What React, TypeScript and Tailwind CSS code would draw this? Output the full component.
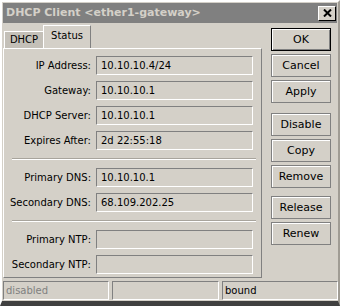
const font = { fontFamily: '"DejaVu Sans", "Liberation Sans", sans-serif' };

type Row = { label: string; value: string };

const groups: Row[][] = [
  [
    { label: "IP Address:", value: "10.10.10.4/24" },
    { label: "Gateway:", value: "10.10.10.1" },
    { label: "DHCP Server:", value: "10.10.10.1" },
    { label: "Expires After:", value: "2d 22:55:18" },
  ],
  [
    { label: "Primary DNS:", value: "10.10.10.1" },
    { label: "Secondary DNS:", value: "68.109.202.25" },
  ],
  [
    { label: "Primary NTP:", value: "" },
    { label: "Secondary NTP:", value: "" },
  ],
];

const buttonGroups = [
  ["OK", "Cancel", "Apply"],
  ["Disable", "Copy", "Remove"],
  ["Release", "Renew"],
];

function Field({ label, value }: Row) {
  return (
    <div className="flex items-center h-[19px]">
      <div className="w-[87px] text-right text-[10px] text-black leading-none">
        {label}
      </div>
      <div className="ml-[5px] w-[157px] h-[19px] border-t border-l border-[#808080] border-b-white border-r-white border-b border-r flex items-center pl-[4px] text-[10px] text-black leading-none">
        {value}
      </div>
    </div>
  );
}

function Button({ label, primary }: { label: string; primary?: boolean }) {
  return (
    <div
      className={
        "w-[60px] h-[23px] flex items-center justify-center text-[11px] text-black leading-none " +
        (primary
          ? "border border-black shadow-[inset_1px_1px_0_#ffffff,inset_-1px_-1px_0_#808080]"
          : "border border-[#808080] shadow-[inset_1px_1px_0_#ffffff]")
      }
    >
      {label}
    </div>
  );
}

export default function App() {
  return (
    <div
      className="w-[340px] h-[306px] bg-[#d4d0c8] border-t-2 border-l-2 border-white border-r-2 border-r-[#a09c94] border-b-[5px] border-b-[#404040] overflow-hidden"
      style={font}
    >
      {/* Title bar */}
      <div className="mx-[1px] mt-[1px] h-[20px] bg-[#808080] flex items-center justify-between pl-[3px] pr-[1px]">
        <span className="text-[11px] font-bold text-[#d4d0c8]">
          DHCP Client &lt;ether1-gateway&gt;
        </span>
        <div className="w-[18px] h-[15px] bg-[#d4d0c8] border-t border-l border-white border-b border-r border-b-black border-r-black flex items-center justify-center">
          <svg width="9" height="8" viewBox="0 0 9 8">
            <path d="M1 0.5 L8 7.5 M8 0.5 L1 7.5" stroke="#000" strokeWidth="2" />
          </svg>
        </div>
      </div>

      <div className="flex pl-[1px]">
        {/* Left: tabs + panel */}
        <div className="w-[259px]">
          <div className="flex items-end h-[25px] pl-[1px]">
            <div className="h-[17px] w-[39px] bg-[#c4c0b8] border-t border-l border-white flex items-center justify-center text-[10px] text-black leading-none">
              DHCP
            </div>
            <div className="h-[23px] w-[48px] bg-[#d4d0c8] border-t border-l border-white border-r border-r-[#808080] flex items-center justify-center text-[10px] text-black leading-none pb-[2px]">
              Status
            </div>
          </div>
          <div className="h-[230px] border-t border-l border-white border-r border-b border-r-[#808080] border-b-[#808080] pt-[7px]">
            {groups.map((g, gi) => (
              <div key={gi}>
                {gi > 0 && (
                  <div className="ml-[8px] w-[244px] h-[2px] border-t border-[#a8a49c] border-b border-b-white my-[8px]" />
                )}
                <div className="flex flex-col gap-[6px]">
                  {g.map((r) => (
                    <Field key={r.label} {...r} />
                  ))}
                </div>
              </div>
            ))}
          </div>
        </div>

        {/* Right: buttons */}
        <div className="ml-[9px] pt-[5px] flex flex-col">
          {buttonGroups.map((bg, i) => (
            <div
              key={i}
              className={
                "flex flex-col gap-[3px] " +
                (i === 1 ? "mt-[10px]" : i === 2 ? "mt-[8px]" : "")
              }
            >
              {bg.map((b) => (
                <Button key={b} label={b} primary={b === "OK"} />
              ))}
            </div>
          ))}
        </div>
      </div>

      {/* Status bar */}
      <div className="flex gap-[3px] pl-[1px] mt-[3px] h-[19px]">
        <div className="w-[106px] border-t border-l border-[#808080] border-b border-r border-b-white border-r-white flex items-center pl-[2px] text-[10px] text-[#808080] leading-none">
          disabled
        </div>
        <div className="w-[107px] border-t border-l border-[#808080] border-b border-r border-b-white border-r-white" />
        <div className="w-[116px] border-t border-l border-[#808080] border-b border-r border-b-white border-r-white flex items-center pl-[2px] text-[10px] text-black leading-none">
          bound
        </div>
      </div>
    </div>
  );
}
